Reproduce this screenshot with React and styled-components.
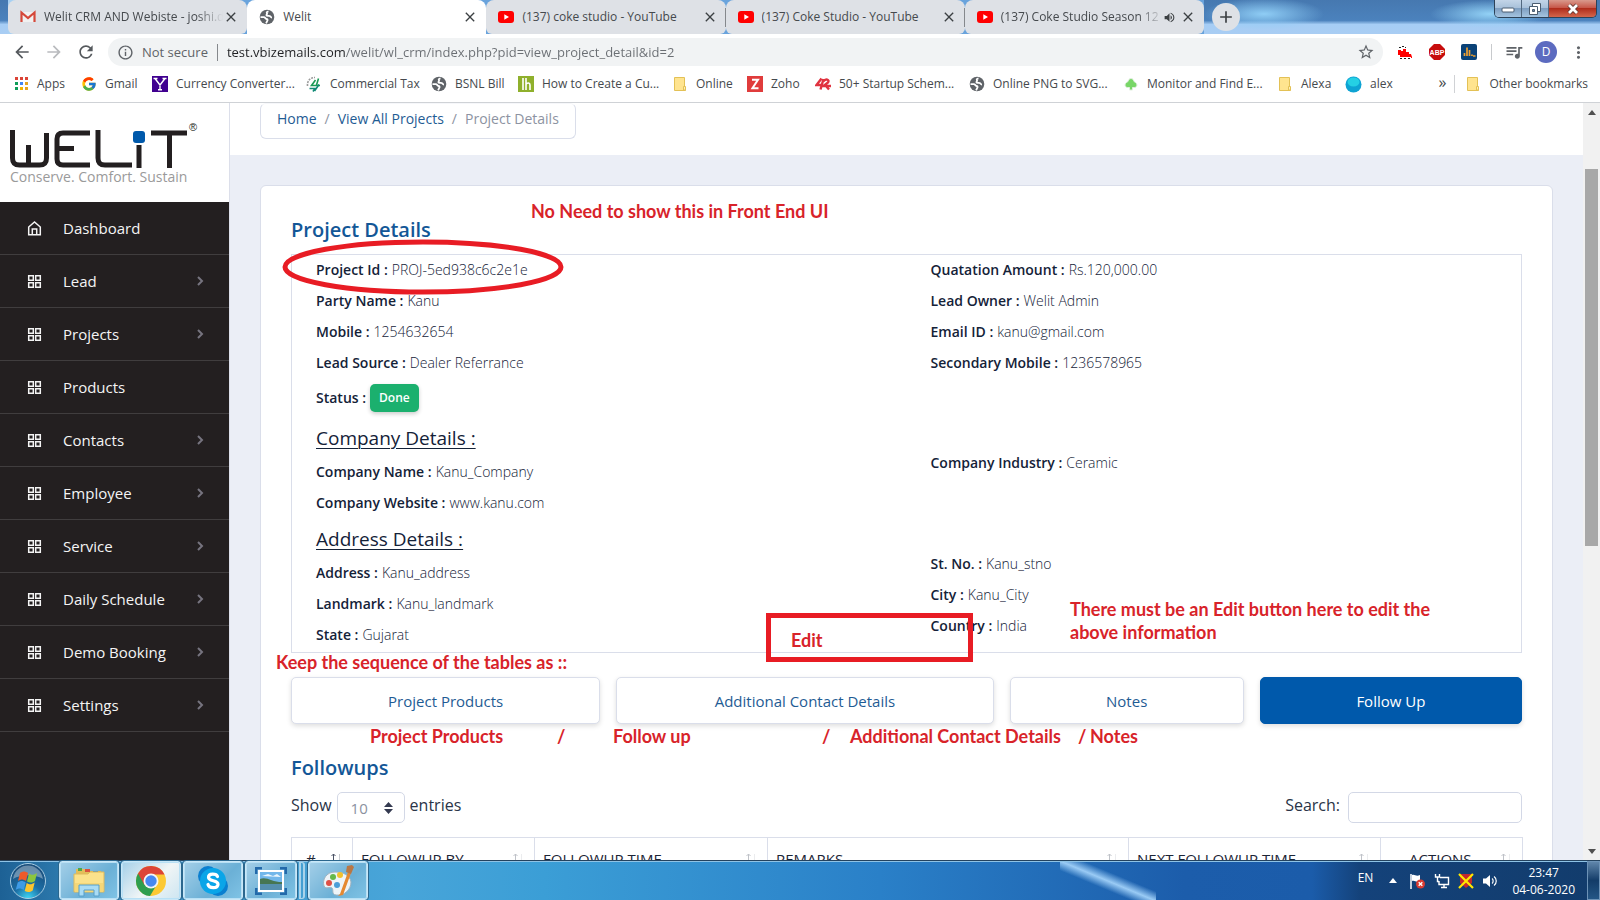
import React from "react";
import styled, { createGlobalStyle, css } from "styled-components";
import {
  MdArrowBack, MdArrowForward, MdRefresh, MdInfoOutline, MdStarBorder,
  MdQueueMusic, MdMoreVert, MdVolumeUp, MdClose, MdAdd,
} from "react-icons/md";
import { FcGoogle } from "react-icons/fc";

const UI = '"Open Sans", "Noto Sans", sans-serif';
const BODY = '"Open Sans", "Noto Sans", sans-serif';
const RED = "#d8232a";

const Global = createGlobalStyle`
  * { box-sizing: border-box; }
  body { margin: 0; font-family: ${BODY}; overflow: hidden; }
  button, input, select { font: inherit; color: inherit; }
  button { cursor: pointer; padding: 0; border: 0; background: none; }
  a { color: inherit; text-decoration: none; }
  h1, h2, h3, p, dl, dd, ul { margin: 0; padding: 0; }
  ul { list-style: none; }
  svg { display: block; flex: none; }
`;

const Desktop = styled.div`
  height: 100vh;
  display: flex;
  flex-direction: column;
`;

/* ---------- browser chrome ---------- */
const TabStrip = styled.header`
  height: 34px;
  flex: none;
  display: flex;
  padding-left: 8px;
  background:
    radial-gradient(ellipse 60px 16px at 1264px 14px, #8fcdf5, transparent),
    radial-gradient(ellipse 60px 14px at 1490px 14px, #93d2f6, transparent),
    linear-gradient(#4678b0, #4b82bd 60%, #a6cdf5 72%, #a9cdf3);
`;
const Tabs = styled.div`
  display: flex;
  flex: 0 1 1196px;
  min-width: 0;
  background: linear-gradient(90deg, #a8d1f3, #69a3dc 20%);
`;
const TabItem = styled.div`
  flex: 1 1 0;
  min-width: 0;
  display: flex;
  align-items: center;
  padding: 0 8px 0 12px;
  font: 12px/20px ${UI};
  color: #45494d;
  background: ${(p) => (p.$active ? "#fff" : "#dee1e6")};
  border-radius: 8px 8px ${(p) => (p.$active ? "0 0" : "6px 6px")};
  position: relative;
  ${(p) => p.$divider && css`
    &::after { content: ""; position: absolute; right: 0; top: 8px; height: 19px; width: 1px; background: #85888c; }
  `}
`;
const TabTitle = styled.button`
  flex: 1;
  min-width: 0;
  display: flex;
  align-items: center;
  gap: 8px;
  text-align: left;
  span {
    flex: 1;
    white-space: nowrap;
    overflow: hidden;
    ${(p) => p.$fade && "mask-image: linear-gradient(90deg, #000 85%, transparent);"}
  }
`;
const IconButton = styled.button`
  display: grid;
  place-items: center;
  color: ${(p) => p.$color || "#3c4043"};
`;
const TabAudio = styled(IconButton)`
  margin-right: 4px;
`;
const NewTab = styled(IconButton)`
  width: 28px;
  height: 28px;
  margin: 3px 0 0 8px;
  border-radius: 50%;
  background: #dee1e6;
`;
const WindowControls = styled.div`
  margin: 0 3px 0 auto;
  height: 18px;
  display: flex;
  border: 1px solid #2d4258;
  border-top: 0;
  border-radius: 0 0 5px 5px;
  overflow: hidden;
`;
const WinButton = styled(IconButton)`
  width: ${(p) => (p.$close ? 47 : 27)}px;
  border-right: ${(p) => (p.$close ? 0 : "1px solid #52687f")};
  background: ${(p) => (p.$close
    ? "linear-gradient(#d99a8d, #c7584a 45%, #b02d1c 50%, #d4664c)"
    : "linear-gradient(#c3d5e8, #a9c1da 45%, #7f9fc1 50%, #a5c4e0)")};
`;

const Toolbar = styled.nav`
  height: 36px;
  flex: none;
  display: flex;
  align-items: center;
  background: #fff;
  padding: 0 6px;
`;
const NavButton = styled(IconButton)`
  width: 32px;
  height: 32px;
`;
const Omnibox = styled.div`
  flex: 1;
  height: 28px;
  margin: 0 6px;
  padding: 0 8px 0 9px;
  border-radius: 14px;
  background: #f1f3f4;
  display: flex;
  align-items: center;
  font: 13px/20px ${UI};
  color: #5f6368;
`;
const Security = styled.label`
  display: flex;
  align-items: center;
  gap: 8px;
  padding-right: 9px;
  margin-right: 9px;
  border-right: 1px solid #85888c;
  line-height: 16px;
`;
const Url = styled.input`
  flex: 1;
  min-width: 0;
  border: 0;
  padding: 0;
  outline: 0;
  background: linear-gradient(90deg, #202124 119px, #6a6e73 119px);
  background-clip: text;
  color: transparent;
`;
const Separator = styled.span`
  width: 1px;
  height: 16px;
  margin: 0 6px;
  background: #c8cacd;
`;
const Avatar = styled.button`
  width: 22px;
  height: 22px;
  margin: 0 5px;
  border-radius: 50%;
  background: #5c6bc0;
  color: #fff;
  font: 12px/22px ${UI};
`;
const Bookmarks = styled.nav`
  height: 33px;
  flex: none;
  display: flex;
  align-items: center;
  background: #fff;
  border-bottom: 1px solid #cfd2d6;
  padding: 0 12px 4px 13px;
  font: 12px/18px ${UI};
  color: #45494d;
`;
const Bookmark = styled.a`
  flex: 0 1 ${(p) => p.$width}px;
  min-width: 0;
  display: flex;
  align-items: center;
  gap: 8px;
  white-space: nowrap;
`;
const MoreBookmarks = styled.button`
  margin-left: auto;
  padding: 0 8px 4px;
  font-size: 16px;
  line-height: 16px;
`;
const OtherBookmarks = styled(Bookmark)`
  flex: none;
  padding-left: 10px;
  border-left: 1px solid #d0d2d5;
`;

/* ---------- web page ---------- */
const Viewport = styled.div`
  flex: 1;
  min-height: 0;
  display: flex;
  overflow: hidden;
`;
const Sidebar = styled.aside`
  width: 229px;
  flex: none;
  background: #231f20;
  overflow: hidden;
`;
const Brand = styled.a`
  display: block;
  height: 99px;
  padding: 18px 0 0 8px;
  background: #fff;
`;
const NavLink = styled.a`
  height: 53px;
  display: flex;
  align-items: center;
  padding: 0 24px 0 27px;
  gap: 21px;
  border-bottom: 1px solid #403d3e;
  color: #f4f4f4;
  font-size: 15px;
  line-height: 20px;
  span { flex: 1; }
`;
const Content = styled.main`
  flex: 1;
  min-width: 0;
  background: #ebeef6;
  box-shadow: inset 1px 0 #dcdfea;
`;
const Heading = styled.div`
  height: 52px;
  padding: 0 30px;
  margin-left: 1px;
  background: #fff;
`;
const Breadcrumb = styled.nav`
  display: inline-flex;
  gap: 8px;
  height: 36px;
  padding: 5px 16px 0;
  border: 1px solid #dadeea;
  border-top-color: #f6f7fa;
  border-radius: 6px;
  font-size: 14px;
  line-height: 20px;
  color: #8d93a2;
  a { color: #1f5c94; }
`;
const Card = styled.section`
  position: relative;
  margin: 30px 30px 0 31px;
  padding: 30px;
  height: 800px;
  background: #fff;
  border: 1px solid #dadeea;
  border-radius: 6px;
`;
const Title = styled.h1`
  font-size: 20px;
  line-height: 28px;
  font-weight: 600;
  color: #135797;
`;
const Details = styled.div`
  margin-top: 10px;
  height: 399px;
  border: 1px solid #dadeea;
  display: grid;
  grid-template-columns: 1fr 1fr;
  grid-template-rows: 168px 101px 1fr;
  color: #142238;
  > * { padding-left: 24px; }
`;
const Fields = styled.dl`
  padding-top: ${(p) => (p.$offset ? 25 : 0)}px;
  font-size: 14px;
  line-height: 30px;
`;
const Field = styled.div`
  display: flex;
  align-items: ${(p) => (p.$badge ? "center" : "baseline")};
  gap: 4px;
  height: ${(p) => (p.$badge ? 38 : 31)}px;
  dt { font-weight: 600; }
  dd { font-weight: 300; }
`;
const Badge = styled.span`
  display: block;
  padding: 0 9px;
  border-radius: 5px;
  background: #1bb06e;
  box-shadow: 0 2px 4px #0003;
  color: #fff;
  font-size: 12px;
  font-weight: 600;
  line-height: 28px;
`;
const Subtitle = styled.h2`
  height: 34px;
  font-size: 19px;
  font-weight: 500;
  line-height: 30px;
  text-decoration: underline;
  text-decoration-thickness: 1px;
  text-underline-offset: 3px;
`;
const Actions = styled.div`
  display: grid;
  grid-template-columns: 309fr 377fr 234fr 262fr;
  gap: 16px;
  margin-top: 24px;
`;
const Action = styled.button`
  height: 47px;
  border: 1px solid ${(p) => (p.$primary ? "#0059ab" : "#dadeea")};
  border-radius: 5px;
  background: ${(p) => (p.$primary ? "#0059ab" : "#fff")};
  color: ${(p) => (p.$primary ? "#fff" : "#1f5c94")};
  box-shadow: 0 2px 5px #0002;
  font-size: 15px;
  line-height: 20px;
`;
const Followups = styled(Title).attrs({ as: "h2" })`
  margin-top: 30px;
`;
const TableTools = styled.div`
  display: flex;
  justify-content: space-between;
  margin-top: 10px;
  color: #2a3447;
  font-size: 16px;
  line-height: 27px;
`;
const Control = styled.label`
  display: flex;
  gap: 5px;
`;
const SelectBox = styled.span`
  position: relative;
  svg { position: absolute; right: 12px; top: 10px; pointer-events: none; }
`;
const Select = styled.select`
  appearance: none;
  width: 68px;
  height: 31px;
  padding: 2px 13px 0;
  border: 1px solid #d3d8e6;
  border-radius: 5px;
  background: #fff;
  color: #8b91a0;
  font-size: 15px;
`;
const Search = styled.input`
  width: 174px;
  height: 31px;
  margin-left: 3px;
  border: 1px solid #d3d8e6;
  border-radius: 5px;
`;
const Table = styled.table`
  width: 100%;
  margin-top: 14px;
  border-collapse: collapse;
  table-layout: fixed;
  color: #1c2536;
  th {
    height: 42px;
    padding: 0 8px;
    border: 1px solid #dadeea;
    text-align: left;
    font-size: 15px;
    font-weight: 500;
    white-space: nowrap;
  }
`;
const HeadCell = styled.div`
  display: flex;
  align-items: center;
  justify-content: space-between;
  line-height: 20px;
  padding-left: ${(p) => p.$indent || 0}px;
  svg { opacity: ${(p) => (p.$sorted ? 1 : 0.35)}; }
`;

/* ---------- review marks over the card ---------- */
const Note = styled.p`
  position: absolute;
  left: ${(p) => p.$x}px;
  top: ${(p) => p.$y}px;
  color: ${RED};
  font: bold 18px/23px Lato, sans-serif;
  white-space: nowrap;
`;
const EditMark = styled.div`
  position: absolute;
  left: 505px;
  top: 427px;
  width: 207px;
  height: 49px;
  padding: 11px 20px;
  border: 5px solid #e81c24;
  color: ${RED};
  font: bold 18px/23px Lato, sans-serif;
`;
const Ring = styled.svg`
  position: absolute;
  left: 20px;
  top: 53px;
`;

const Scrollbar = styled.div`
  width: 17px;
  flex: none;
  display: flex;
  flex-direction: column;
  align-items: center;
  background: #f1f1f1;
`;
const Arrow = styled.button`
  height: 18px;
  display: grid;
  place-items: center;
`;
const Track = styled.div`
  flex: 1;
  width: 13px;
  padding-top: 48px;
`;
const Thumb = styled.div`
  height: 56%;
  background: #a8a8a8;
`;

/* ---------- taskbar ---------- */
const Taskbar = styled.footer`
  height: 40px;
  flex: none;
  display: flex;
  border-top: 1px solid #24435f;
  box-shadow: inset 0 1px #8ec3e6;
  background:
    linear-gradient(to top right, #9acbf500 38%, #9acbf5 50%, #9acbf500 62%) 1060px 0 / 96px 40px no-repeat,
    linear-gradient(90deg, #1d6195, #3d93c6 8%, #48a5d9 25%, #3b9ed6 34%, #2a80c8 55%, #1c5dab 74%, #1b5caa 82%, #14427a 85%, #123c6c);
`;
const Start = styled.button`
  width: 59px;
  padding-right: 4px;
  display: grid;
  place-items: center;
`;
const TaskButton = styled.button`
  width: ${(p) => p.$width || 60}px;
  height: 39px;
  margin-right: 2px;
  display: grid;
  place-items: center;
  border: 1px solid #c9e7f7;
  border-radius: 3px;
  outline: 1px solid #2b678e;
  box-shadow: inset 0 0 0 1px #b8e0f5;
  background: linear-gradient(135deg, #a4cfe8, ${(p) => (p.$active ? "#f0f5f6 55%, #cde5f1" : "#6bb0d6 60%, #80c4e6")});
`;
const Stack = styled.span`
  width: 6px;
  margin: 1px 3px 1px 0;
  border: solid #a9d3ea;
  border-width: 1px 2px;
  border-radius: 0 3px 3px 0;
`;
const Tray = styled.div`
  margin-left: auto;
  display: flex;
  align-items: center;
  gap: 8px;
  color: #fff;
  font: 12px/20px ${UI};
`;
const Language = styled.span`
  margin: 0 8px 6px 0;
`;
const TrayIcons = styled.div`
  display: flex;
  gap: 8px;
  margin-left: 4px;
`;
const Clock = styled.time`
  margin: 0 4px 0 6px;
  line-height: 17px;
  text-align: center;
`;
const ShowDesktop = styled.button`
  width: 13px;
  height: 39px;
  border: 1px solid #6d93b7;
  background: linear-gradient(#5f85aa, #133c68 50%, #245685);
`;

/* ---------- drawings ---------- */
const YouTube = () => (
  <svg width="16" height="16" viewBox="0 0 16 16"><rect x="0" y="2" width="16" height="12" rx="3" fill="#f00" /><path d="M6.3 5.3v5.4L11 8z" fill="#fff" /></svg>
);
const Globe = () => (
  <svg width="16" height="16" viewBox="0 0 16 16"><circle cx="8" cy="8" r="7.300" fill="#5f6368" /><path d="M1.500 8.200h3.300c1.500 0 1.500 1.600 2.700 1.800 1.500.3 1.200 1.500.6 2.200l-1 2.200M9.500 2.300C8 2.500 7.300 3.500 8 4.300c.6.700-.8 1.200-.6 2 .3 1 1.900.4 2.900.6 1.300.2 1.300 1.700 2.700 1.600" fill="none" stroke="#fff" strokeWidth="1.800" /></svg>
);
const GmailM = () => (
  <svg width="16" height="16" viewBox="0 0 16 16"><path d="M2 3h12v10H2z" fill="#f1f1f1" /><path d="M1.500 13V3.500L8 9l6.500-5.500V13" fill="none" stroke="#d5483a" strokeWidth="2.200" /></svg>
);
const Folder = () => (
  <svg width="16" height="16" viewBox="0 0 16 16"><path d="M2.500 1.500h10v9l1 1v3h-11z" fill="#ffe48f" stroke="#e3c156" /><path d="M11.500 14v-3.500h2V14z" fill="#fff0b5" stroke="#e3c156" /></svg>
);
const AppsGrid = () => (
  <svg width="16" height="16" viewBox="0 0 16 16">
    {["#db4437", "#db4437", "#db4437", "#0f9d58", "#4285f4", "#e6a420", "#0f9d58", "#f4b400", "#e6a420"].map((c, i) => (
      <rect key={i} x={2 + (i % 3) * 5} y={1 + Math.floor(i / 3) * 5} width="3" height="3" fill={c} />
    ))}
  </svg>
);
const YahooY = () => (
  <svg width="16" height="16" viewBox="0 0 16 16"><rect width="16" height="16" fill="#400090" /><path d="M3 2.500l5 6.500 5-6.500M8 8.500V14M1.500 2.500h4M10.500 2.500h4M6 13.700h4" fill="none" stroke="#fff" strokeWidth="1.400" /></svg>
);
const TaxMark = () => (
  <svg width="16" height="16" viewBox="0 0 16 16" fill="none" strokeWidth="1.600"><path d="M1.500 10C1 5 4 1.500 9 1.500" stroke="#9a9a9a" strokeDasharray="2 1" /><path d="M9.500 4L5.500 9.500H14M12.500 2.500L10.500 9" stroke="#1b9a55" /><path d="M3.500 12.500h5.500l-2 3M13 8.500L8.500 15" stroke="#128a76" /></svg>
);
const LhMark = () => (
  <svg width="16" height="16" viewBox="0 0 16 16"><rect width="16" height="16" fill="#8fb02c" /><path d="M5 2v12M8 2v12M8 8.500c1-2 4-2 4 .5v5" fill="none" stroke="#fff" strokeWidth="1.600" /></svg>
);
const ZMark = () => (
  <svg width="16" height="16" viewBox="0 0 16 16"><rect width="16" height="16" fill="#e03c3c" /><path d="M5 3.700h6L5.400 12.300H11.500" fill="none" stroke="#fff" strokeWidth="2" /></svg>
);
const FortyTwo = () => (
  <svg width="16" height="16" viewBox="0 0 16 16" fill="none" stroke="#e03340" strokeWidth="2.400"><path d="M6.500 2.500L1.500 9h6M8.500 3L5.500 13.500M8.500 5.500C10.500 2 15 3.500 13 6.500L8.500 10H16M11 10l3 3.500" /></svg>
);
const Tree = () => (
  <svg width="16" height="16" viewBox="0 0 16 16"><path d="M8 2.500c2 0 2.500 2 3.500 3.500 3 1 3.500 5 0 5.500H9.500V14h-3v-2.500h-2C1 11 1.500 7 4.500 6 5.500 4.500 6 2.500 8 2.500z" fill="#78d667" stroke="#e2efe0" /></svg>
);
const Alex = () => (
  <svg width="17" height="17" viewBox="0 0 17 17"><circle cx="8.500" cy="8.500" r="8" fill="#0ea3d3" /><ellipse cx="8.500" cy="6" rx="6" ry="4.500" fill="#25d0e4" /></svg>
);
const Train = () => (
  <svg width="16" height="16" viewBox="0 0 16 16"><path d="M1 6h3v1h2V5h3v3h3v2h2l1 3v1h-1v-1H3v-2H1z" fill="#f00" /><path d="M2 3.500h2M5 2.500h2M8 3.500h1M3 14.500h2M7 14.500h2M11 14.500h2" stroke="#222" /></svg>
);
const Abp = () => (
  <svg width="18" height="18" viewBox="0 0 18 18"><path d="M6 1h6l5 5v6l-5 5H6l-5-5V6z" fill="#c70d0d" /><text x="9" y="12" textAnchor="middle" fontSize="7" fontWeight="bold" fill="#fff" fontFamily="Liberation Sans, sans-serif">ABP</text></svg>
);
const Bars = () => (
  <svg width="16" height="16" viewBox="0 0 16 16"><rect width="16" height="16" rx="2" fill="#0a4277" /><path d="M3.500 12V9M6 12V3.500M8.500 12V6M11 12v-1.500M12 12h2.500" stroke="#f0a030" strokeWidth="1.700" /></svg>
);
const GridIcon = () => (
  <svg width="15" height="15" viewBox="0 0 15 15" fill="none" stroke="#f4f4f4" strokeWidth="1.500"><path d="M1.700 1.700h4.600v4.600H1.700zM8.700 1.700h4.600v4.600H8.700zM1.700 8.700h4.600v4.600H1.700zM8.700 8.700h4.600v4.600H8.700z" /></svg>
);
const HomeIcon = () => (
  <svg width="15" height="15" viewBox="0 0 15 15" fill="none" stroke="#f4f4f4" strokeWidth="1.500"><path d="M1.700 13.800V6l5.800-5 5.800 5v7.800zM5.300 13.800V8h4.400v5.800" /></svg>
);
const Chevron = () => (
  <svg width="10" height="10" viewBox="0 0 10 10" fill="none" stroke="#76747f" strokeWidth="2"><path d="M3 1l4 4-4 4" /></svg>
);
const SortIcon = () => (
  <svg width="14" height="14" viewBox="0 0 14 14" fill="none" stroke="#4a5265"><path d="M3.500 12V2M1.500 4l2-2 2 2" /><path d="M9.500 2v10M7.500 10l2 2 2-2" opacity=".3" /></svg>
);
const Logo = () => (
  <svg width="196" height="66" viewBox="0 0 196 66" role="img" aria-label="Welit">
    <g fill="none" stroke="#231f20" strokeWidth="5">
      <path d="M4.500 9v28c0 5 2 7 7 7h20c5 0 7-2 7-7V12M20.500 24v20" />
      <path d="M82 12H55c-4 0-6 2-6 6v20c0 4 2 6 6 6h27M51 27.500h15" />
      <path d="M90 9v28c0 5 2 7 7 7h27" />
      <path d="M131 24v23M143 12h36M161.500 12v35" />
    </g>
    <rect x="125" y="10" width="12" height="12" rx="3" fill="#0059ab" />
    <text x="181" y="10" fontSize="11" fill="#231f20" fontFamily="Liberation Sans, sans-serif">®</text>
    <text x="2" y="61" fontSize="14" fill="#9a9a9a" fontFamily="Open Sans, sans-serif">Conserve. Comfort. Sustain</text>
  </svg>
);
const Orb = () => (
  <svg width="38" height="38" viewBox="0 0 38 38">
    <defs>
      <radialGradient id="orb" cx=".5" cy="1" r=".9"><stop offset="0" stopColor="#3fd8f5" /><stop offset=".45" stopColor="#1b6ea5" /><stop offset="1" stopColor="#1a4e7c" /></radialGradient>
    </defs>
    <circle cx="19" cy="19" r="17.500" fill="url(#orb)" stroke="#a8cce2" />
    <path d="M4 17C7-1 31-1 34 17c-8-5-22-5-30 0z" fill="#fff" opacity=".35" />
    <path d="M11 11c3-2 5-2 8 0l-2 8c-3-2-5-2-8 0z" fill="#ee5a2a" />
    <path d="M20 11.500c3 2 5 1.500 8-.5l-2 8c-3 2-5 2-8 .5z" fill="#8cc63e" />
    <path d="M8.700 20.500c3-2 5-2 8 0l-2 7.500c-3-2-5-2-8 0z" fill="#3f9be6" />
    <path d="M17.700 21c3 2 5 1.500 8-.5l-2 8c-3 2-5 2-8 .5z" fill="#fdc52f" />
  </svg>
);
const Explorer = () => (
  <svg width="34" height="32" viewBox="0 0 34 32"><path d="M4 4h9l2 2h14v20H4z" fill="#e3be59" /><path d="M6 3h4v3H6z" fill="#4fa84c" /><path d="M13 4h5v3h-5z" fill="#d9523f" /><path d="M21 6h5v3h-5z" fill="#3f8ed0" /><path d="M2 9h14l2-2h14v20H2z" fill="#fbe28b" stroke="#dcb95d" /><path d="M3 18h28v9H3z" fill="#f5d778" /><path d="M7 31V20h20v11h-5v-6H12v6z" fill="#a9dcf5" stroke="#579fc9" /></svg>
);
const ChromeIcon = () => (
  <svg width="32" height="32" viewBox="0 0 32 32"><circle cx="16" cy="16" r="15" fill="#fcc934" /><path d="M16 16L3 8.500A15 15 0 0 0 15 31l6.500-11z" fill="#2e9e4f" /><path d="M3 8.500A15 15 0 0 1 29.500 9.500H16L9.500 20z" fill="#dc4437" /><circle cx="16" cy="16" r="7.500" fill="#f5f5f5" /><circle cx="16" cy="16" r="5.700" fill="#4688f1" /></svg>
);
const SkypeIcon = () => (
  <svg width="32" height="32" viewBox="0 0 32 32"><circle cx="11" cy="11" r="10" fill="#0a7fd0" /><circle cx="21" cy="21" r="10" fill="#0a7fd0" /><circle cx="16" cy="16" r="13" fill="#0aa5e8" /><path d="M20.500 11.500c-1-3-9-3.500-9 .7 0 4.800 9.500 2.300 9.500 7 0 4.600-9 4.300-10 .3" fill="none" stroke="#fff" strokeWidth="3.200" strokeLinecap="round" /></svg>
);
const Viewer = () => (
  <svg width="32" height="28" viewBox="0 0 32 28"><path d="M1 7V1h6M25 1h6v6M31 21v6h-6M7 27H1v-6" fill="none" stroke="#2269aa" strokeWidth="3" /><rect x="3" y="3" width="26" height="22" fill="#fff" /><rect x="5" y="5" width="22" height="18" fill="#72b7ea" /><path d="M5 12c6-3 12 3 22 3v3H5z" fill="#467652" /><path d="M5 17h22v6H5z" fill="#558fae" /><path d="M7 9l6-2 5 2 4-2 4 3z" fill="#e9f5fc" /></svg>
);
const Palette = () => (
  <svg width="34" height="34" viewBox="0 0 34 34"><path d="M14 8C5 8 1 16 3 22c2 4 6 0 8 2s-1 6 4 7c8 1 15-5 15-13C29 11 22 8 14 8z" fill="#eef4f8" stroke="#9fb3c0" /><circle cx="8" cy="19" r="3" fill="#e05046" /><circle cx="12" cy="13" r="3" fill="#65b84a" /><circle cx="19" cy="11" r="3" fill="#f2c12e" /><circle cx="16" cy="21" r="3" fill="#4c9ed8" /><path d="M17 32l2-2 8-22 3 1-8 22z" fill="#e58932" /><path d="M25 8l1-6 5-1 2 2-3 7z" fill="#b87746" /></svg>
);
const FlagIcon = () => (
  <svg width="17" height="16" viewBox="0 0 17 16"><path d="M2 1v15" stroke="#fff" strokeWidth="1.500" /><path d="M3 2c3-1 4 2 8 0v6c-4 2-5-1-8 0z" fill="#fff" /><circle cx="11.500" cy="11" r="4.500" fill="#d93b32" /><path d="M9.700 9.200l3.600 3.600M13.300 9.200l-3.600 3.600" stroke="#fff" strokeWidth="1.400" /></svg>
);
const NetIcon = () => (
  <svg width="16" height="16" viewBox="0 0 16 16" fill="none" stroke="#fff" strokeWidth="1.400"><path d="M6 4.500h8.500v7H5V8M7 14.500h6M10 11.500v3M1.500 1v3h4V1M3.500 4v4.500H5" /></svg>
);
const CrossIcon = () => (
  <svg width="16" height="16" viewBox="0 0 16 16"><path d="M2 1h12v9l-6 5-6-5z" fill="#c4282d" /><path d="M1 1l14 14M15 1L1 15" stroke="#ffe800" strokeWidth="2.200" /></svg>
);
const Speaker = () => (
  <svg width="16" height="16" viewBox="0 0 16 16"><path d="M1 5.500h3L8 2v12l-4-3.500H1z" fill="#fff" /><path d="M10 5.500c1.500 1 1.500 4 0 5M12 3.500c3 2 3 7 0 9" fill="none" stroke="#fff" strokeWidth="1.200" /></svg>
);

/* ---------- data ---------- */
const tabs = [
  { icon: <GmailM />, title: "Welit CRM AND Webiste - joshi.d", fade: true },
  { icon: <Globe />, title: "Welit", active: true },
  { icon: <YouTube />, title: "(137) coke studio - YouTube", divider: true },
  { icon: <YouTube />, title: "(137) Coke Studio - YouTube", divider: true },
  { icon: <YouTube />, title: "(137) Coke Studio Season 12", fade: true, audio: true },
];
const bookmarks = [
  [<AppsGrid />, "Apps", 68], [<FcGoogle size={16} />, "Gmail", 71], [<YahooY />, "Currency Converter...", 154],
  [<TaxMark />, "Commercial Tax", 125], [<Globe />, "BSNL Bill", 87], [<LhMark />, "How to Create a Cu...", 154],
  [<Folder />, "Online", 75], [<ZMark />, "Zoho", 68], [<FortyTwo />, "50+ Startup Schem...", 154],
  [<Globe />, "Online PNG to SVG...", 154], [<Tree />, "Monitor and Find E...", 154], [<Folder />, "Alexa", 68], [<Alex />, "alex", 60],
];
const menu = ["Dashboard", "Lead", "Projects", "Products", "Contacts", "Employee", "Service", "Daily Schedule", "Demo Booking", "Settings"];
const noSubmenu = ["Dashboard", "Products"];
const columns = [
  ["#", 61, 6], ["FOLLOWUP BY", 182], ["FOLLOWUP TIME", 233], ["REMARKS", 361], ["NEXT FOLLOWUP TIME", 252], ["ACTIONS", 142, 20],
];
const notes = [
  [270, 14, "No Need to show this in Front End UI"],
  [15, 465, "Keep the sequence of the tables as ::"],
  [109, 539, "Project Products"], [296, 539, "/"], [352, 539, "Follow up"], [561, 539, "/"],
  [589, 539, "Additional Contact Details"], [817, 539, "/"], [829, 539, "Notes"],
];

const FieldList = ({ rows, offset, children }) => (
  <Fields $offset={offset}>
    {rows.map(([name, value]) => (
      <Field key={name}><dt>{name} :</dt><dd>{value}</dd></Field>
    ))}
    {children}
  </Fields>
);

export default function App() {
  return (
    <Desktop>
      <Global />
      <TabStrip>
        <Tabs>
          {tabs.map((t, i) => (
            <TabItem key={i} $active={t.active} $divider={t.divider}>
              <TabTitle $fade={t.fade}>{t.icon}<span>{t.title}</span></TabTitle>
              {t.audio && <TabAudio aria-label="Mute tab"><MdVolumeUp size={13} /></TabAudio>}
              <IconButton aria-label="Close tab"><MdClose size={16} /></IconButton>
            </TabItem>
          ))}
        </Tabs>
        <NewTab aria-label="New tab"><MdAdd size={20} /></NewTab>
        <WindowControls>
          <WinButton aria-label="Minimize"><svg width="14" height="8" viewBox="0 0 14 8"><rect x="1" y="3" width="12" height="4" rx="1" fill="#fff" stroke="#4b5d70" /></svg></WinButton>
          <WinButton aria-label="Restore"><svg width="14" height="14" viewBox="0 0 14 14" fill="#fff" stroke="#4b5d70"><path d="M4.500 1.500h8v8h-8z" /><path d="M1.500 4.500h8v8h-8z" /><path d="M4.500 7.500h2v2h-2z" fill="#6f89a5" /></svg></WinButton>
          <WinButton $close aria-label="Close"><svg width="14" height="12" viewBox="0 0 14 12"><path d="M3 2l8 8M11 2l-8 8" stroke="#5d3530" strokeWidth="4.500" /><path d="M3 2l8 8M11 2l-8 8" stroke="#fff" strokeWidth="2.800" /></svg></WinButton>
        </WindowControls>
      </TabStrip>

      <Toolbar aria-label="Browser toolbar">
        <NavButton aria-label="Back" $color="#55595d"><MdArrowBack size={20} /></NavButton>
        <NavButton aria-label="Forward" $color="#b9bbbe"><MdArrowForward size={20} /></NavButton>
        <NavButton aria-label="Reload" $color="#55595d"><MdRefresh size={20} /></NavButton>
        <Omnibox>
          <Security htmlFor="url"><MdInfoOutline size={17} />Not secure</Security>
          <Url id="url" defaultValue="test.vbizemails.com/welit/wl_crm/index.php?pid=view_project_detail&id=2" />
          <IconButton aria-label="Bookmark this page" $color="#5f6368"><MdStarBorder size={18} /></IconButton>
        </Omnibox>
        <NavButton aria-label="Train"><Train /></NavButton>
        <NavButton aria-label="Adblock Plus"><Abp /></NavButton>
        <NavButton aria-label="Analytics"><Bars /></NavButton>
        <Separator />
        <NavButton aria-label="Media" $color="#5f6368"><MdQueueMusic size={20} /></NavButton>
        <Avatar>D</Avatar>
        <NavButton aria-label="Menu" $color="#5f6368"><MdMoreVert size={19} /></NavButton>
      </Toolbar>
      <Bookmarks aria-label="Bookmarks">
        {bookmarks.map(([icon, name, width], i) => (
          <Bookmark key={i} href="#" $width={width}>{icon}{name}</Bookmark>
        ))}
        <MoreBookmarks aria-label="More bookmarks">»</MoreBookmarks>
        <OtherBookmarks href="#"><Folder />Other bookmarks</OtherBookmarks>
      </Bookmarks>

      <Viewport>
        <Sidebar>
          <Brand href="#"><Logo /></Brand>
          <nav>
            {menu.map((m) => (
              <NavLink key={m} href="#">
                {m === "Dashboard" ? <HomeIcon /> : <GridIcon />}
                <span>{m}</span>
                {!noSubmenu.includes(m) && <Chevron />}
              </NavLink>
            ))}
          </nav>
        </Sidebar>
        <Content>
          <Heading>
            <Breadcrumb aria-label="Breadcrumb">
              <a href="#">Home</a><span>/</span><a href="#">View All Projects</a><span>/</span><span>Project Details</span>
            </Breadcrumb>
          </Heading>
          <Card>
            <Title>Project Details</Title>
            <Details>
              <FieldList rows={[["Project Id", "PROJ-5ed938c6c2e1e"], ["Party Name", "Kanu"], ["Mobile", "1254632654"], ["Lead Source", "Dealer Referrance"]]}>
                <Field $badge><dt>Status :</dt><dd><Badge>Done</Badge></dd></Field>
              </FieldList>
              <FieldList rows={[["Quatation Amount", "Rs.120,000.00"], ["Lead Owner", "Welit Admin"], ["Email ID", "kanu@gmail.com"], ["Secondary Mobile", "1236578965"]]} />
              <div>
                <Subtitle>Company Details :</Subtitle>
                <FieldList rows={[["Company Name", "Kanu_Company"], ["Company Website", "www.kanu.com"]]} />
              </div>
              <FieldList offset rows={[["Company Industry", "Ceramic"]]} />
              <div>
                <Subtitle>Address Details :</Subtitle>
                <FieldList rows={[["Address", "Kanu_address"], ["Landmark", "Kanu_landmark"], ["State", "Gujarat"]]} />
              </div>
              <FieldList offset rows={[["St. No.", "Kanu_stno"], ["City", "Kanu_City"], ["Country", "India"]]} />
            </Details>
            <Actions>
              <Action>Project Products</Action>
              <Action>Additional Contact Details</Action>
              <Action>Notes</Action>
              <Action $primary>Follow Up</Action>
            </Actions>
            <Followups>Followups</Followups>
            <TableTools>
              <Control>
                Show
                <SelectBox>
                  <Select defaultValue="10"><option>10</option><option>25</option></Select>
                  <svg width="9" height="12" viewBox="0 0 9 12" fill="#343a50"><path d="M4.500 0L9 5H0zM4.500 12L0 7h9z" /></svg>
                </SelectBox>
                entries
              </Control>
              <Control>Search:<Search type="search" /></Control>
            </TableTools>
            <Table>
              <colgroup>{columns.map(([name, width]) => <col key={name} width={width} />)}</colgroup>
              <thead>
                <tr>
                  {columns.map(([name, , indent], i) => (
                    <th key={name} scope="col"><HeadCell $indent={indent} $sorted={i === 0}>{name}<SortIcon /></HeadCell></th>
                  ))}
                </tr>
              </thead>
            </Table>

            <Ring width="284" height="56" viewBox="0 0 284 56"><ellipse cx="142" cy="28" rx="138" ry="25" fill="none" stroke="#e81c24" strokeWidth="5" /></Ring>
            {notes.map(([x, y, text], i) => <Note key={i} $x={x} $y={y}>{text}</Note>)}
            <Note $x={809} $y={412}>There must be an Edit button here to edit the<br />above information</Note>
            <EditMark>Edit</EditMark>
          </Card>
        </Content>
        <Scrollbar>
          <Arrow aria-label="Scroll up"><svg width="8" height="5" viewBox="0 0 8 5"><path d="M0 5l4-5 4 5z" fill="#505050" /></svg></Arrow>
          <Track><Thumb /></Track>
          <Arrow aria-label="Scroll down"><svg width="8" height="5" viewBox="0 0 8 5"><path d="M0 0l4 5 4-5z" fill="#505050" /></svg></Arrow>
        </Scrollbar>
      </Viewport>

      <Taskbar>
        <Start aria-label="Start"><Orb /></Start>
        <TaskButton aria-label="Explorer"><Explorer /></TaskButton>
        <TaskButton aria-label="Chrome" $active><ChromeIcon /></TaskButton>
        <TaskButton aria-label="Skype"><SkypeIcon /></TaskButton>
        <TaskButton aria-label="Photo viewer" $width={52}><Viewer /></TaskButton>
        <Stack />
        <TaskButton aria-label="Paint"><Palette /></TaskButton>
        <Tray>
          <Language>EN</Language>
          <svg width="8" height="5" viewBox="0 0 8 5"><path d="M0 5l4-5 4 5z" fill="#fff" /></svg>
          <TrayIcons><FlagIcon /><NetIcon /><CrossIcon /><Speaker /></TrayIcons>
          <Clock>23:47<br />04-06-2020</Clock>
          <ShowDesktop aria-label="Show desktop" />
        </Tray>
      </Taskbar>
    </Desktop>
  );
}
